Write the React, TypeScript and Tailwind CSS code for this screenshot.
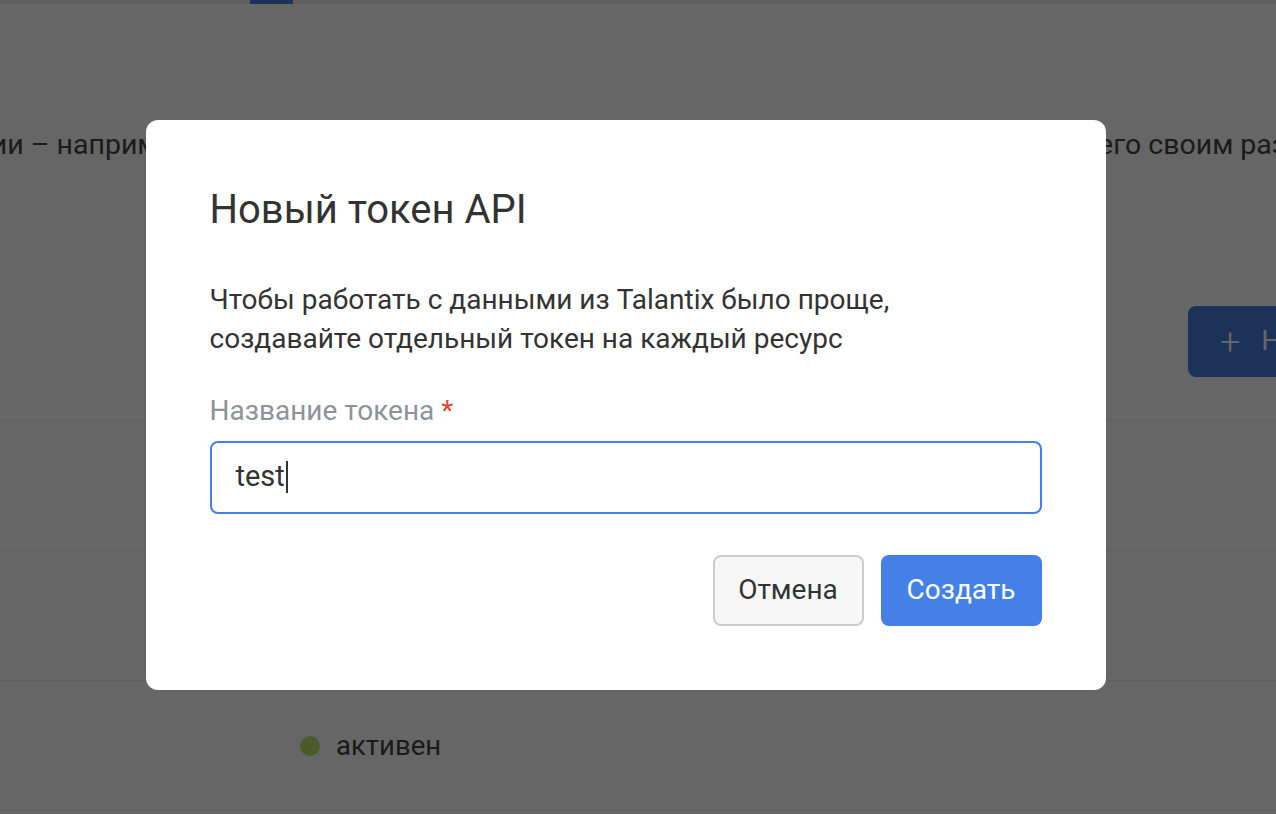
import React from 'react';

const font = { fontFamily: 'Roboto, "Noto Sans", sans-serif' };

const TokenRow = ({ children }: { children?: React.ReactNode }) => (
  <div className="h-[130px] border-b border-[#ececec] flex items-center pl-[300px]">{children}</div>
);

const App = () => {
  return (
    <div className="relative h-screen w-full overflow-hidden bg-white" style={font}>
      {/* Page behind the dialog */}
      <div className="h-[4px] bg-[#ececec]">
        <div className="ml-[250px] h-[4px] w-[43px] bg-[#487dde]"></div>
      </div>

      <p className="mt-[123px] -ml-[500px] whitespace-nowrap text-[28.5px] leading-[35px] text-[#454545]">
        Используйте токен API для интеграции – например, с 1С или собственной CRM-системой вашей компании. Передайте его своим разработчикам.
      </p>

      <div className="mt-[144px] flex justify-end -mr-[192px]">
        <button className="flex h-[71px] items-center gap-[21px] rounded-lg bg-[#487dde] pl-[32px] pr-[32px] text-[28.5px] text-white">
          <span className="text-[36px] font-light leading-none">+</span>
          <span>Новый токен</span>
        </button>
      </div>

      <div className="mt-[43px] border-b border-[#ececec]"></div>
      <TokenRow />
      <TokenRow />
      <TokenRow>
        <span className="h-[20px] w-[20px] rounded-full bg-[#b8e06a]"></span>
        <span className="ml-[16px] text-[27.5px] leading-[35px] text-[#454545]">активен</span>
      </TokenRow>

      {/* Dialog */}
      <div className="fixed inset-0 flex items-center justify-center bg-black/60 pr-[25px] pb-[5px]">
        <div className="w-[960px] rounded-xl bg-white p-16">
          <h2 className="text-[40px] leading-[52px] text-[#333333]">Новый токен API</h2>
          <p className="mt-[44px] text-[28px] leading-[39px] text-[#333333]">
            Чтобы работать с данными из Talantix было проще,
            <br />
            создавайте отдельный токен на каждый ресурс
          </p>
          <label className="mt-[33px] block text-[28px] leading-[39px] text-[#8e9299]">
            Название токена <span className="text-[#d9472f]">*</span>
          </label>
          <div className="mt-[11px] flex h-[73px] items-center rounded-lg border-2 border-[#4580e6] px-[24px] text-[29px] text-[#333333]">
            test<span className="ml-[1px] h-[32px] w-[2px] bg-[#333333]"></span>
          </div>
          <div className="mt-[41px] flex justify-end gap-[17px]">
            <button className="h-[71px] w-[151px] rounded-lg border-2 border-[#cccccc] bg-[#f7f7f7] text-[28px] text-[#333333]">
              Отмена
            </button>
            <button className="h-[71px] w-[161px] rounded-lg bg-[#4580e6] text-[28px] text-white">
              Создать
            </button>
          </div>
        </div>
      </div>
    </div>
  );
};

export default App;
